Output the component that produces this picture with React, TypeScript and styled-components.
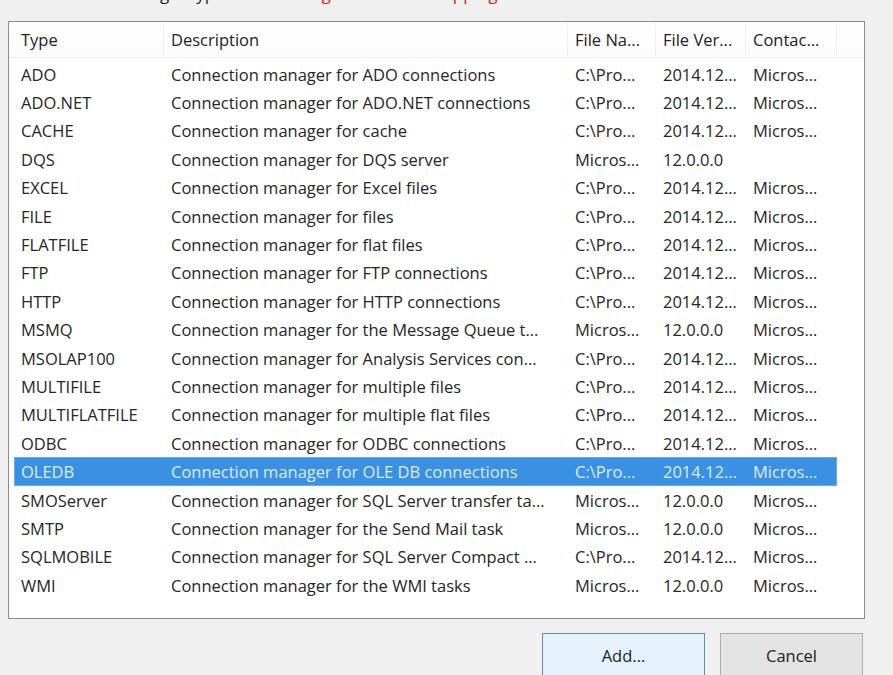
import React from "react";
import styled, { createGlobalStyle } from "styled-components";

const GlobalStyle = createGlobalStyle`
  html, body { margin: 0; padding: 0; background: #f0f0f0; }
  body { font-family: "Open Sans", "Noto Sans", "Liberation Sans", sans-serif; }
`;

const Page = styled.div`
  width: 893px;
  height: 675px;
  overflow: hidden;
  background: #f0f0f0;
  display: flex;
  flex-direction: column;
`;

const Caption = styled.div`
  height: 9px;
  overflow: hidden;
  flex: none;
`;

const CaptionLine = styled.div`
  margin-top: -17px;
  padding-left: 20px;
  display: flex;
  gap: 42px;
  font-size: 17px;
  line-height: 22px;
  white-space: nowrap;
`;

const CaptionText = styled.span<{ $warn?: boolean }>`
  color: ${(p) => (p.$warn ? "#d2232a" : "#1e1e1e")};
`;

const ListBox = styled.div`
  margin: 12px 0 0 8px;
  width: 855px;
  height: 596px;
  border: 1px solid #8c8c8c;
  background: #ffffff;
  flex: none;
  display: flex;
  flex-direction: column;
`;

const cols = "150px 404px 88px 90px 91px";

const HeaderRow = styled.div`
  display: grid;
  grid-template-columns: ${cols};
  height: 35px;
  padding-left: 5px;
  border-bottom: 1px solid #efefef;
  background: linear-gradient(#ffffff, #fbfbfb);
`;

const HeaderCell = styled.div`
  display: flex;
  align-items: center;
  padding-left: 7px;
  font-size: 16.5px;
  color: #222;
  border-right: 1px solid #f0f0f0;
  white-space: nowrap;
  overflow: hidden;
`;

const Rows = styled.div`
  padding: 2px 0 0 5px;
  display: flex;
  flex-direction: column;
  align-items: flex-start;
`;

const Row = styled.div<{ $selected?: boolean }>`
  display: grid;
  grid-template-columns: ${cols};
  height: 28.4px;
  align-items: center;
  background: ${(p) => (p.$selected ? "#3a91e4" : "transparent")};
  color: ${(p) => (p.$selected ? "#dcecfa" : "#262626")};
  box-shadow: ${(p) => (p.$selected ? "inset 0 0 0 1px #62aef0" : "none")};
`;

const Cell = styled.div`
  padding-left: 7px;
  font-size: 16.5px;
  white-space: nowrap;
  overflow: hidden;
`;

const Footer = styled.div`
  display: flex;
  justify-content: flex-end;
  gap: 15px;
  padding: 14px 30px 0 0;
`;

const Button = styled.div<{ $default?: boolean; $w: number }>`
  width: ${(p) => p.$w}px;
  height: 44px;
  box-sizing: border-box;
  display: flex;
  align-items: center;
  justify-content: center;
  font-size: 16.5px;
  color: #222;
  background: ${(p) => (p.$default ? "#e5f1fb" : "#e3e3e3")};
  border: 1px solid ${(p) => (p.$default ? "#5590c8" : "#adadad")};
`;

type Item = [string, string, string, string, string];

const items: Item[] = [
  ["ADO", "Connection manager for ADO connections", "C:\\Pro...", "2014.12...", "Micros..."],
  ["ADO.NET", "Connection manager for ADO.NET connections", "C:\\Pro...", "2014.12...", "Micros..."],
  ["CACHE", "Connection manager for cache", "C:\\Pro...", "2014.12...", "Micros..."],
  ["DQS", "Connection manager for DQS server", "Micros...", "12.0.0.0", ""],
  ["EXCEL", "Connection manager for Excel files", "C:\\Pro...", "2014.12...", "Micros..."],
  ["FILE", "Connection manager for files", "C:\\Pro...", "2014.12...", "Micros..."],
  ["FLATFILE", "Connection manager for flat files", "C:\\Pro...", "2014.12...", "Micros..."],
  ["FTP", "Connection manager for FTP connections", "C:\\Pro...", "2014.12...", "Micros..."],
  ["HTTP", "Connection manager for HTTP connections", "C:\\Pro...", "2014.12...", "Micros..."],
  ["MSMQ", "Connection manager for the Message Queue t...", "Micros...", "12.0.0.0", "Micros..."],
  ["MSOLAP100", "Connection manager for Analysis Services con...", "C:\\Pro...", "2014.12...", "Micros..."],
  ["MULTIFILE", "Connection manager for multiple files", "C:\\Pro...", "2014.12...", "Micros..."],
  ["MULTIFLATFILE", "Connection manager for multiple flat files", "C:\\Pro...", "2014.12...", "Micros..."],
  ["ODBC", "Connection manager for ODBC connections", "C:\\Pro...", "2014.12...", "Micros..."],
  ["OLEDB", "Connection manager for OLE DB connections", "C:\\Pro...", "2014.12...", "Micros..."],
  ["SMOServer", "Connection manager for SQL Server transfer ta...", "Micros...", "12.0.0.0", "Micros..."],
  ["SMTP", "Connection manager for the Send Mail task", "Micros...", "12.0.0.0", "Micros..."],
  ["SQLMOBILE", "Connection manager for SQL Server Compact ...", "C:\\Pro...", "2014.12...", "Micros..."],
  ["WMI", "Connection manager for the WMI tasks", "Micros...", "12.0.0.0", "Micros..."],
];

const headers = ["Type", "Description", "File Na...", "File Ver...", "Contac..."];

export default function App() {
  return (
    <>
      <GlobalStyle />
      <Page>
        <Caption>
          <CaptionLine>
            <CaptionText>Connection manager type:</CaptionText>
            <CaptionText $warn>Missing connection mapping</CaptionText>
          </CaptionLine>
        </Caption>
        <ListBox>
          <HeaderRow>
            {headers.map((h) => (
              <HeaderCell key={h}>{h}</HeaderCell>
            ))}
          </HeaderRow>
          <Rows>
            {items.map((it) => (
              <Row key={it[0]} $selected={it[0] === "OLEDB"}>
                {it.map((c, i) => (
                  <Cell key={i}>{c}</Cell>
                ))}
              </Row>
            ))}
          </Rows>
        </ListBox>
        <Footer>
          <Button $default $w={163}>Add...</Button>
          <Button $w={143}>Cancel</Button>
        </Footer>
      </Page>
    </>
  );
}
